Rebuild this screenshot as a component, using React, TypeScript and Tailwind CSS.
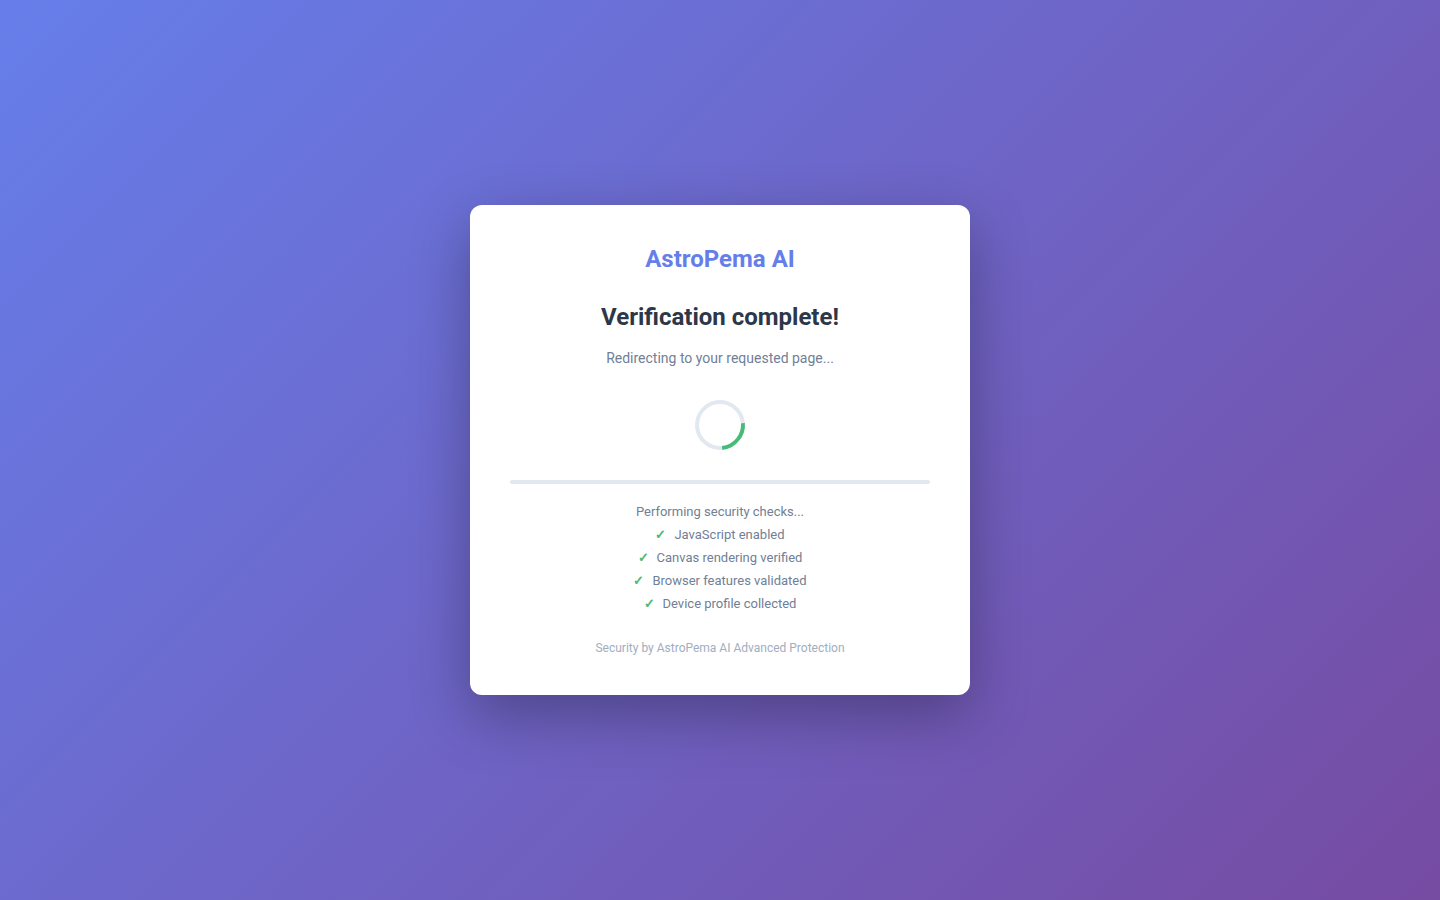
import React from 'react';

const checks = [
  'JavaScript enabled',
  'Canvas rendering verified',
  'Browser features validated',
  'Device profile collected',
];

const App: React.FC = () => {
  return (
    <div
      className="min-h-screen w-full flex items-center justify-center bg-[linear-gradient(135deg,#667eea_0%,#764ba2_100%)]"
      style={{ fontFamily: 'Roboto, "Noto Sans", sans-serif' }}
    >
      <div className="w-[500px] bg-white rounded-xl px-10 pt-[38px] pb-[39px] text-center shadow-[0_20px_60px_rgba(0,0,0,0.3)]">
        <div className="text-[24px] leading-[32px] font-bold text-[#667eea]">AstroPema AI</div>
        <h1 className="mt-[27px] text-[24px] leading-[30px] font-bold text-[#2d3748]">
          Verification complete!
        </h1>
        <p className="mt-4 text-[14px] leading-5 text-[#718096]">Redirecting to your requested page...</p>

        <div className="mt-[32px] flex justify-center">
          <div className="w-[50px] h-[50px] rounded-full border-4 border-[#e2e8f0] border-t-[#48bb78] rotate-[130deg]" />
        </div>

        <div className="mt-[30px] h-1 w-full rounded-full bg-[#e2e8f0]" />

        <div className="mt-4 text-[13px] leading-[23px] text-[#718096]">
          <div>Performing security checks...</div>
          {checks.map((c) => (
            <div key={c} className="flex items-center justify-center gap-2">
              <span className="text-[#48bb78] font-bold">✓</span>
              <span>{c}</span>
            </div>
          ))}
        </div>

        <div className="mt-[25px] text-[12px] leading-4 text-[#a0aec0]">
          Security by AstroPema AI Advanced Protection
        </div>
      </div>
    </div>
  );
};

export default App;
